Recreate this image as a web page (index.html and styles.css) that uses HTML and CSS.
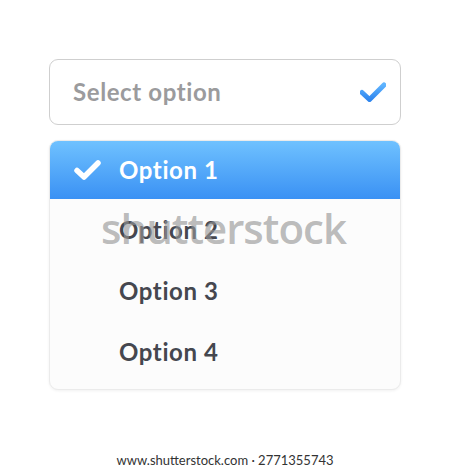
FILE: index.html
```html
<!DOCTYPE html>
<html>
<head>
<meta charset="utf-8">
<link rel="stylesheet" href="styles.css">
</head>
<body>
<div class="page">
  <div class="stage">
    <div class="select">
      <span class="select-label">Select option</span>
      <svg class="select-check" width="26" height="20" viewBox="0 0 26 20">
        <defs>
          <linearGradient id="bc" x1="0" y1="0" x2="0" y2="1">
            <stop offset="0" stop-color="#5fb4ff"/>
            <stop offset="1" stop-color="#2f86ee"/>
          </linearGradient>
        </defs>
        <path d="M2 10.5 L9.5 17.5 L24 3" fill="none" stroke="url(#bc)" stroke-width="5" stroke-linecap="round" stroke-linejoin="round"/>
      </svg>
    </div>
    <div class="menu">
      <div class="item active">
        <svg class="item-check" width="27" height="22" viewBox="0 0 27 22">
          <path d="M3 11.5 L10 18 L24 4" fill="none" stroke="#fff" stroke-width="5.5" stroke-linecap="round" stroke-linejoin="round"/>
        </svg>
        <span>Option 1</span>
      </div>
      <div class="item"><span>Option 2</span></div>
      <div class="item"><span>Option 3</span></div>
      <div class="item"><span>Option 4</span></div>
    </div>
    <div class="watermark">shutterstock</div>
  </div>
  <div class="footer">www.shutterstock.com · 2771355743</div>
</div>
</body>
</html>
```

FILE: styles.css
```css
* { box-sizing: border-box; }
html, body { margin: 0; padding: 0; background: #fff; }
body { font-family: Lato, "Open Sans", sans-serif; }
.page {
  width: 450px;
  height: 470px;
  display: flex;
  flex-direction: column;
  align-items: center;
}
.stage {
  position: relative;
  margin-top: 59px;
  width: 352px;
  display: flex;
  flex-direction: column;
  gap: 15px;
}
.select {
  height: 66px;
  border: 1.5px solid #cfcfcf;
  border-radius: 9px;
  background: #fff;
  display: flex;
  align-items: center;
  justify-content: space-between;
  padding: 0 14px 0 23px;
}
.select-label {
  font-size: 24px;
  font-weight: 700;
  letter-spacing: 0.6px;
  color: #9b9b9d;
  margin-top: -2px;
}
.menu {
  height: 250px;
  border: 1px solid #ebebeb;
  border-radius: 9px;
  background: #fcfcfc;
  box-shadow: 0 1px 3px rgba(0,0,0,0.06);
  overflow: hidden;
  display: flex;
  flex-direction: column;
}
.item {
  height: 61px;
  display: flex;
  align-items: center;
  padding-left: 69px;
  font-size: 24px;
  font-weight: 700;
  letter-spacing: 0.6px;
  color: #45474f;
  position: relative;
}
.item.active {
  height: 59px;
  background: linear-gradient(#70c2ff, #3a91f4);
  color: #fff;
  margin: -1px -1px 0;
  padding-left: 70px;
}
.item-check {
  position: absolute;
  left: 25px;
  top: 19px;
}
.watermark {
  position: absolute;
  left: 52px;
  top: 140px;
  font-family: "Open Sans", sans-serif;
  font-size: 42px;
  font-weight: 600;
  letter-spacing: -1px;
  color: rgba(150,150,150,0.65);
  pointer-events: none;
}
.footer {
  margin-top: auto;
  height: 20px;
  font-size: 13px;
  color: #333;
  line-height: 20px;
  padding-bottom: 2px;
}
```
